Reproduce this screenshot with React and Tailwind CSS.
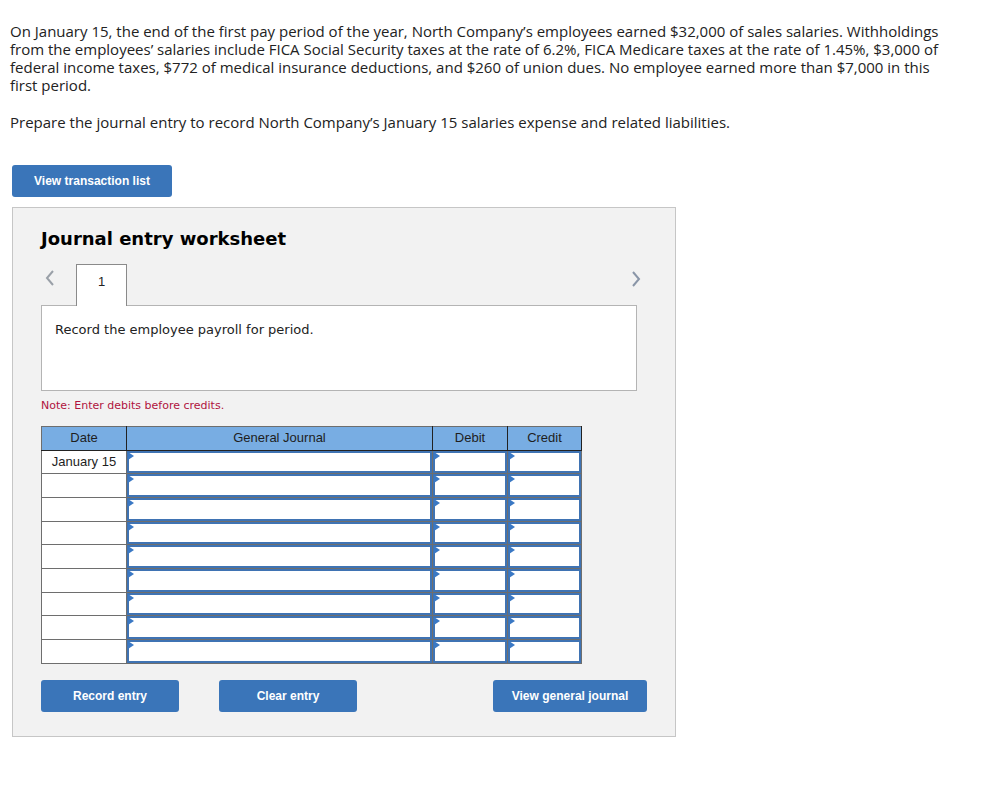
import React from "react";

const rows = ["January 15", "", "", "", "", "", "", "", ""];

const InputCell = () => (
  <td className="border border-[#6e6e6e] p-0">
    <div className="relative h-[22.7px] border-2 border-[#3f73b3] bg-white">
      <span className="absolute left-[-1px] top-[-1px] w-0 h-0 border-y-[4px] border-y-transparent border-l-[6px] border-l-[#3a78c4]" />
    </div>
  </td>
);

const App = () => {
  return (
    <div className="min-h-screen bg-white text-[#222] pt-[22px] pl-[10px] pr-[40px]" style={{ fontFamily: "'Open Sans', sans-serif" }}>
      {/* Question text */}
      <p className="text-[15px] leading-[18px]">
        On January 15, the end of the first pay period of the year, North Company’s employees earned $32,000 of sales salaries. Withholdings from the employees’ salaries include FICA Social Security taxes at the rate of 6.2%, FICA Medicare taxes at the rate of 1.45%, $3,000 of federal income taxes, $772 of medical insurance deductions, and $260 of union dues. No employee earned more than $7,000 in this first period.
      </p>
      <p className="text-[15px] leading-[18px] mt-[19px]">
        Prepare the journal entry to record North Company’s January 15 salaries expense and related liabilities.
      </p>

      <button
        className="mt-[34px] ml-[2px] w-[160px] h-[32px] rounded-[3px] bg-[#3a75b9] text-white text-[12px] font-bold"
        style={{ fontFamily: "'Liberation Sans', Arial, sans-serif" }}
      >
        View transaction list
      </button>

      {/* Worksheet panel */}
      <div className="mt-[10px] ml-[2px] w-[664px] h-[530px] bg-[#f2f2f2] border border-[#c6c6c6] pl-[28px] pt-[20px]">
        <h2 className="text-[18px] font-bold text-black leading-[22px]" style={{ fontFamily: "'DejaVu Sans', Verdana, sans-serif" }}>
          Journal entry worksheet
        </h2>

        <div className="flex items-end mt-[14px] w-[596px] relative">
          <svg width="10" height="16" viewBox="0 0 10 16" className="ml-[4px] mb-[19px] mr-[21px]">
            <path d="M8 1 L2 8 L8 15" fill="none" stroke="#9aa0a8" strokeWidth="2" />
          </svg>
          <div className="w-[51px] h-[42px] bg-white border border-b-0 border-[#8a8a8a] flex justify-center pt-[7px] text-[13px] text-[#222] -mb-px relative z-10" style={{ fontFamily: "'Liberation Sans', Arial, sans-serif" }}>
            1
          </div>
          <svg width="10" height="16" viewBox="0 0 10 16" className="absolute right-[-4px] top-[7px]">
            <path d="M2 1 L8 8 L2 15" fill="none" stroke="#8a96a8" strokeWidth="2" />
          </svg>
        </div>
        <div className="w-[596px] h-[86px] bg-white border border-[#b4b4b4] px-[13px] pt-[14px] text-[13px] text-[#222]" style={{ fontFamily: "'DejaVu Sans', Verdana, sans-serif" }}>
          Record the employee payroll for period.
        </div>

        <p className="mt-[7px] text-[11px] text-[#b0133e]" style={{ fontFamily: "'DejaVu Sans', Verdana, sans-serif" }}>
          Note: Enter debits before credits.
        </p>

        <table className="mt-[11px] border-collapse text-[13px] text-[#1e1e1e]" style={{ fontFamily: "'Liberation Sans', Arial, sans-serif" }}>
          <thead>
            <tr className="bg-[#78ade3] h-[24px]">
              <th className="w-[85px] border border-[#6e6e6e] border-r-[#222] border-b-[#222] font-normal">Date</th>
              <th className="w-[306px] border border-[#6e6e6e] border-r-[#222] border-b-[#222] font-normal">General Journal</th>
              <th className="w-[75px] border border-[#6e6e6e] border-r-[#222] border-b-[#222] font-normal">Debit</th>
              <th className="w-[74px] border border-[#6e6e6e] border-r-[#222] border-b-[#222] font-normal">Credit</th>
            </tr>
          </thead>
          <tbody>
            {rows.map((d, i) => (
              <tr key={i}>
                <td className="border border-[#6e6e6e] text-center p-0 bg-white">{d}</td>
                <InputCell />
                <InputCell />
                <InputCell />
              </tr>
            ))}
          </tbody>
        </table>

        <div className="flex mt-[16px] text-[12px] font-bold text-white" style={{ fontFamily: "'Liberation Sans', Arial, sans-serif" }}>
          <button className="w-[138px] h-[32px] rounded-[3px] bg-[#3a75b9]">Record entry</button>
          <button className="ml-[40px] w-[138px] h-[32px] rounded-[3px] bg-[#3a75b9]">Clear entry</button>
          <button className="ml-[136px] w-[154px] h-[32px] rounded-[3px] bg-[#3a75b9]">View general journal</button>
        </div>
      </div>
    </div>
  );
};

export default App;
